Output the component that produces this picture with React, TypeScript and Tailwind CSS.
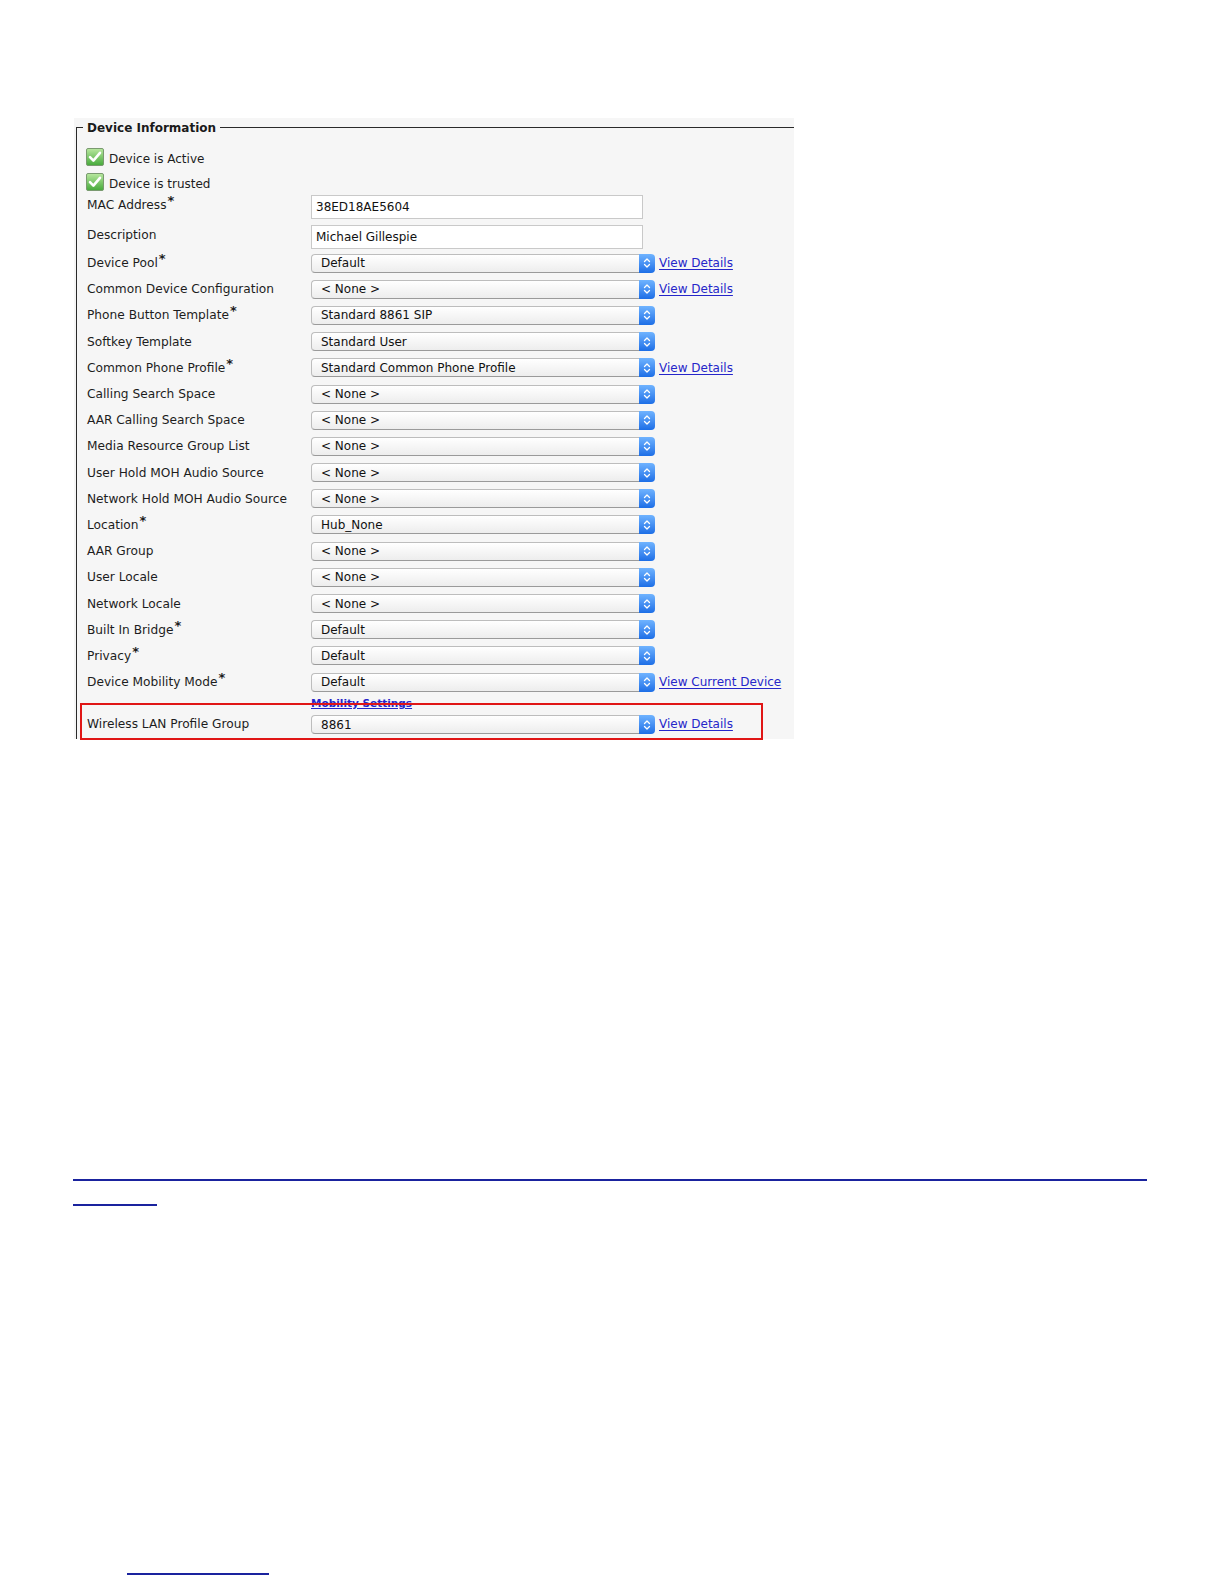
import React from 'react'

type Row = {
  label: string
  star?: boolean
  value: string
  link?: string
}

const selectRows: Row[] = [
  { label: 'Device Pool', star: true, value: 'Default', link: 'View Details' },
  { label: 'Common Device Configuration', value: '< None >', link: 'View Details' },
  { label: 'Phone Button Template', star: true, value: 'Standard 8861 SIP' },
  { label: 'Softkey Template', value: 'Standard User' },
  { label: 'Common Phone Profile', star: true, value: 'Standard Common Phone Profile', link: 'View Details' },
  { label: 'Calling Search Space', value: '< None >' },
  { label: 'AAR Calling Search Space', value: '< None >' },
  { label: 'Media Resource Group List', value: '< None >' },
  { label: 'User Hold MOH Audio Source', value: '< None >' },
  { label: 'Network Hold MOH Audio Source', value: '< None >' },
  { label: 'Location', star: true, value: 'Hub_None' },
  { label: 'AAR Group', value: '< None >' },
  { label: 'User Locale', value: '< None >' },
  { label: 'Network Locale', value: '< None >' },
  { label: 'Built In Bridge', star: true, value: 'Default' },
  { label: 'Privacy', star: true, value: 'Default' },
  { label: 'Device Mobility Mode', star: true, value: 'Default', link: 'View Current Device' },
]

function CheckIcon() {
  return (
    <svg width="18" height="18" viewBox="0 0 18 18">
      <defs>
        <linearGradient id="cbg" x1="0" y1="0" x2="0" y2="1">
          <stop offset="0" stopColor="#b9e8a0" />
          <stop offset="1" stopColor="#45a93a" />
        </linearGradient>
      </defs>
      <rect x="0.5" y="0.5" width="17" height="17" rx="1.5" fill="url(#cbg)" stroke="#7a9a70" />
      <path d="M4 9.2 L7.4 12.6 L14 4.8" fill="none" stroke="#ffffff" strokeWidth="2.6" strokeLinecap="round" strokeLinejoin="round" />
    </svg>
  )
}

function Label({ text, star }: { text: string; star?: boolean }) {
  return (
    <span className="text-[12.2px] text-[#1d1d1d] whitespace-nowrap">
      {text}
      {star && <span className="relative -top-[4px] ml-[1px] text-[13px] font-bold">*</span>}
    </span>
  )
}

function Select({ value }: { value: string }) {
  return (
    <div className="flex w-[344px] h-[19px]">
      <div className="flex-1 flex items-center pl-[9px] text-[12px] text-[#111] border border-[#bdbdbd] border-b-[#9a9a9a] border-r-0 rounded-l-[4px] bg-linear-to-b from-white to-[#ededed] whitespace-pre">
        {value}
      </div>
      <div className="w-[16px] flex items-center justify-center rounded-r-[4px] bg-linear-to-b from-[#6fb3ff] to-[#1c6ee6]">
        <svg width="8" height="12" viewBox="0 0 8 12">
          <path d="M1.5 4.5 L4 2 L6.5 4.5 M1.5 7.5 L4 10 L6.5 7.5" fill="none" stroke="#fff" strokeWidth="1.3" strokeLinecap="round" strokeLinejoin="round" />
        </svg>
      </div>
    </div>
  )
}

function LinkText({ children }: { children: React.ReactNode }) {
  return <span className="ml-[4px] text-[12px] text-[#2626c9] underline underline-offset-[2px] whitespace-nowrap">{children}</span>
}

export default function App() {
  return (
    <div className="w-[1224px] h-[1584px] bg-white font-['DejaVu_Sans',sans-serif] pt-[118px]">
      <div className="ml-[74px] w-[720px] h-[621px] bg-[#f6f6f6] pt-[9px] pl-[2px]">
        <div className="relative h-[612px] border-t border-l border-[#2a2a2a] pt-[16px] pl-[10px]">
          <div className="absolute -top-[8px] left-[6px] px-[4px] bg-[#f6f6f6] text-[12px] font-bold text-[#1a1a1a] leading-[16px]">
            Device Information
          </div>

          <div className="flex items-center h-[25px] -ml-[1px]">
            <CheckIcon />
            <span className="ml-[5px] mt-[4px] text-[12px] text-[#1d1d1d]">Device is Active</span>
          </div>
          <div className="flex items-center h-[25px] -ml-[1px]">
            <CheckIcon />
            <span className="ml-[5px] mt-[4px] text-[12px] text-[#1d1d1d]">Device is trusted</span>
          </div>

          <div className="flex items-start h-[29px]">
            <div className="w-[224px] -mt-[2px]">
              <Label text="MAC Address" star />
            </div>
            <div className="mt-[1px] w-[332px] h-[24px] flex items-center pl-[4px] bg-white border border-[#c9c9c9] text-[12px] text-[#111]">
              38ED18AE5604
            </div>
          </div>
          <div className="flex items-start h-[27px]">
            <div className="w-[224px] -mt-[1px]">
              <Label text="Description" />
            </div>
            <div className="mt-[2px] w-[332px] h-[24px] flex items-center pl-[4px] bg-white border border-[#c9c9c9] text-[12px] text-[#111]">
              Michael Gillespie
            </div>
          </div>

          {selectRows.map((row) => (
            <div key={row.label} className="flex items-center h-[26.2px]">
              <div className="w-[224px] -mt-[2px]">
                <Label text={row.label} star={row.star} />
              </div>
              <Select value={row.value} />
              {row.link && <LinkText>{row.link}</LinkText>}
            </div>
          ))}

          <div className="h-[8px] pl-[224px] relative z-0">
            <span className="relative top-[2px] block text-[10.5px] font-bold leading-[12px] text-[#2626c9] underline whitespace-nowrap">Mobility Settings</span>
          </div>

          <div className="relative z-10 -ml-[7px] w-[683px] h-[37px] border-2 border-[#e01616] pl-[5px] pt-[10px] flex items-start">
            <div className="w-[224px] -mt-[4px]">
              <Label text="Wireless LAN Profile Group" />
            </div>
            <Select value="8861" />
            <LinkText>View Details</LinkText>
          </div>
        </div>
      </div>

      <div className="mt-[440px] ml-[73px] w-[1074px] border-b-2 border-[#1a239e]" />
      <div className="mt-[23px] ml-[73px] w-[84px] border-b-2 border-[#1a239e]" />
      <div className="mt-[367px] ml-[127px] w-[142px] border-b-2 border-[#1a239e]" />
    </div>
  )
}
